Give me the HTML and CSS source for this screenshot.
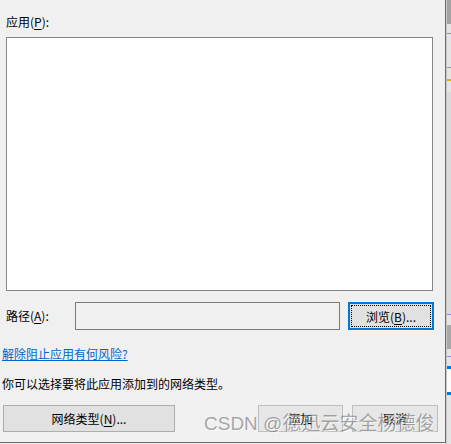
FILE: index.html
```html
<!DOCTYPE html>
<html lang="zh-CN">
<head>
<meta charset="utf-8">
<title>允许的应用</title>
<link rel="stylesheet" href="styles.css">
</head>
<body>
<div class="screen">
  <div class="dialog">
    <div class="label app-label">应用(<u>P</u>):</div>
    <div class="listbox"></div>
    <div class="path-row">
      <div class="label path-label">路径(<u>A</u>):</div>
      <div class="path-input"></div>
      <div class="btn btn-browse"><span class="focus">浏览(<u>B</u>)...</span></div>
    </div>
    <a class="link" href="#">解除阻止应用有何风险?</a>
    <div class="label hint">你可以选择要将此应用添加到的网络类型。</div>
    <div class="btn-row">
      <div class="btn btn-network">网络类型(<u>N</u>)...</div>
      <div class="spacer"></div>
      <div class="btn btn-add">添加</div>
      <div class="btn btn-cancel">取消</div>
    </div>
    <div class="watermark">CSDN @德迅云安全杨德俊</div>
  </div>
  <div class="edge">
    <div class="seg s-dark"></div>
    <div class="seg s-light h9"></div>
    <div class="seg s-line"></div>
    <div class="seg s-light h33"></div>
    <div class="seg s-line"></div>
    <div class="seg s-light h11"></div>
    <div class="seg s-yellow"></div>
    <div class="seg s-light h11"></div>
    <div class="seg s-mid h223"></div>
    <div class="seg s-line"></div>
    <div class="seg s-light h10"></div>
    <div class="seg s-grey h24"></div>
    <div class="seg s-light h7"></div>
    <div class="seg s-line"></div>
    <div class="seg s-light h9"></div>
    <div class="seg s-blue"></div>
    <div class="seg s-white h23"></div>
    <div class="seg s-blue"></div>
    <div class="seg s-light grow"></div>
  </div>
</div>
</body>
</html>
```

FILE: styles.css
```css
html, body {
  margin: 0;
  padding: 0;
  background: #f0f0f0;
}
body {
  font-family: "Noto Sans CJK SC", "Microsoft YaHei", sans-serif;
  font-size: 12px;
  color: #000;
}
.screen {
  display: flex;
  width: 451px;
  height: 444px;
  overflow: hidden;
}
.dialog {
  position: relative;
  width: 446px;
  height: 443px;
  flex: none;
  box-sizing: border-box;
  background: #f0f0f0;
  border-right: 1px solid #6a6a6a;
  border-bottom: 1px solid #6a6a6a;
  padding: 14px 0 0 0;
  display: flex;
  flex-direction: column;
}
.label {
  line-height: 16px;
  white-space: nowrap;
}
u {
  text-decoration: underline;
  text-underline-offset: 2px;
}
.app-label {
  margin-left: 6px;
}
.listbox {
  margin: 7px 0 0 6px;
  width: 427px;
  height: 254px;
  box-sizing: border-box;
  background: #fff;
  border: 1px solid #82878c;
}
.path-row {
  display: flex;
  align-items: center;
  margin: 11px 0 0 6px;
  height: 28px;
}
.path-label {
  width: 69px;
}
.path-input {
  width: 265px;
  height: 28px;
  box-sizing: border-box;
  border: 1px solid #7a7a7a;
  background: #f0f0f0;
}
.btn {
  box-sizing: border-box;
  height: 28px;
  display: flex;
  align-items: center;
  justify-content: center;
  background: #e1e1e1;
  border: 1px solid #adadad;
  white-space: nowrap;
}
.btn-browse {
  margin-left: 8px;
  width: 86px;
  border: 2px solid #0078d7;
  padding: 1px;
}
.btn-browse .focus {
  flex: 1;
  align-self: stretch;
  display: flex;
  align-items: center;
  justify-content: center;
  border: 1px dotted #000;
}
.link {
  margin: 16px 0 0 2px;
  line-height: 16px;
  color: #0066cc;
  text-decoration: underline;
  align-self: flex-start;
}
.hint {
  margin: 14px 0 0 2px;
}
.btn-row {
  display: flex;
  margin: 13px 0 0 3px;
  height: 27px;
}
.btn-row .btn {
  height: 27px;
}
.btn-network {
  width: 172px;
}
.spacer {
  width: 83px;
}
.btn-add {
  width: 85px;
  border-color: #bfbfbf;
  background: #e6e6e6;
}
.btn-cancel {
  margin-left: 9px;
  width: 86px;
  border-color: #bfbfbf;
  background: #e6e6e6;
}
.watermark {
  position: absolute;
  left: 204px;
  top: 412px;
  font-size: 19px;
  line-height: 24px;
  white-space: nowrap;
  font-family: "Liberation Sans", "Noto Sans CJK SC", sans-serif;
  color: rgba(110, 110, 110, 0.6);
  text-shadow: 1px 1px 0 rgba(255, 255, 255, 0.7);
}
.edge {
  flex: 1;
  display: flex;
  flex-direction: column;
  height: 444px;
  border-left: 1px solid #c8c8c8;
}
.seg { flex: none; }
.s-dark { height: 24px; background: #a3a3a3; }
.s-light { background: #e4e4e4; }
.s-mid { background: #dadada; }
.s-grey { background: #a8a8a8; }
.s-white { background: #fafafa; }
.s-line { height: 1px; background: #8e8ec8; }
.s-yellow { height: 2px; background: #d6b400; }
.s-blue { height: 3px; background: #0078d7; }
.h7 { height: 7px; }
.h9 { height: 9px; }
.h10 { height: 10px; }
.h11 { height: 11px; }
.h23 { height: 23px; }
.h24 { height: 24px; }
.h33 { height: 33px; }
.h223 { height: 222px; }
.grow { flex: 1; }
```
